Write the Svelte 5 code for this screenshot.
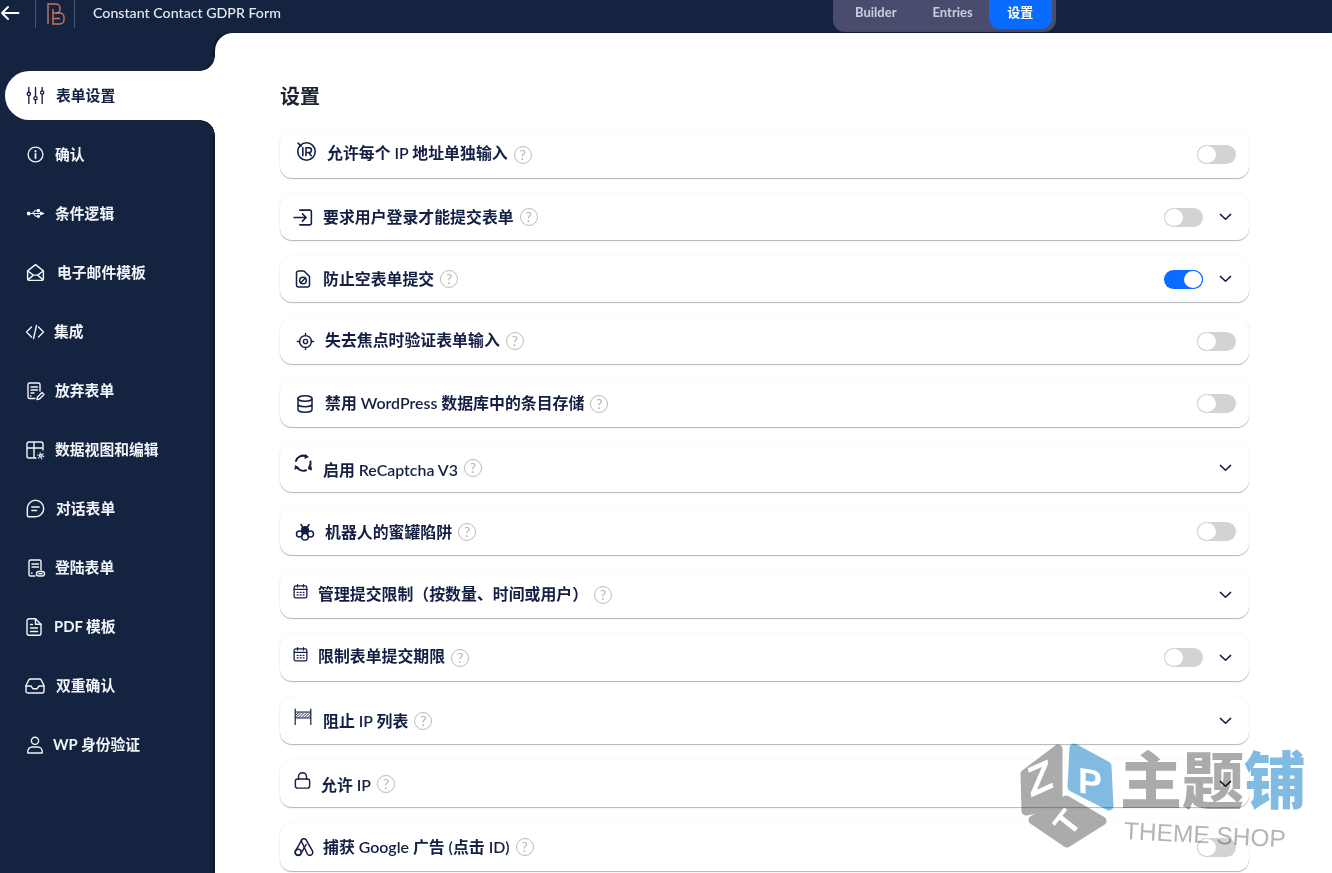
<script>
  const navIcons = {
    sliders: '<path d="M3 1.500v5M3 10v8.500M10 1.500v9.500M10 14.500v4M17 1.500v3.500M17 8.500v10"/><circle cx="3" cy="8.300" r="1.700"/><circle cx="10" cy="12.800" r="1.700"/><circle cx="17" cy="6.800" r="1.700"/>',
    info: '<circle cx="10" cy="10" r="7.800"/><path d="M10 9.400v4.400" stroke-width="1.900"/><path d="M10 6.200v.6" stroke-width="2"/>',
    usb: '<path d="M3 10h12.500M6.500 10l3-3h2.500M7.500 10l3 3h1.500" stroke-width="1.100"/><circle cx="2.800" cy="10" r="1.300" fill="currentColor"/><path d="M15.500 8.700l3 1.300-3 1.300z" fill="currentColor"/><rect x="12" y="6" width="2" height="2" fill="currentColor"/><circle cx="13" cy="13" r="1.100" fill="currentColor"/>',
    mail: '<path d="M2.500 8.500L10 2.500l7.500 6V16a1.500 1.500 0 0 1-1.500 1.500H4A1.500 1.500 0 0 1 2.500 16z"/><path d="M3 16.800l5-4.300h4l5 4.300M3 8.800l5 3.700M17 8.800l-5 3.700"/>',
    code: '<path d="M6.500 5L1.500 10l5 5M13.500 5l5 5-5 5M11.500 3.500l-3 13"/>',
    filepen: '<path d="M10 17.500H4.500A1.500 1.500 0 0 1 3 16V3.500A1.500 1.500 0 0 1 4.500 2h9A1.500 1.500 0 0 1 15 3.500V10"/><path d="M6 6h6.500M6 9h6.500M6 12h3M5.500 15h.5"/><path d="M12 18.500l.5-2.500 4.500-4.500 2 2-4.500 4.500z"/>',
    tablegear: '<path d="M11 18H4a2 2 0 0 1-2-2V4a2 2 0 0 1 2-2h12a2 2 0 0 1 2 2v6M2 8h16M9 2v16"/><circle cx="15.800" cy="15.800" r="1.300" stroke-width="1.400"/><circle cx="15.800" cy="15.800" r="2.900" stroke-width="1.200" stroke-dasharray="1.300 1.700" stroke-linecap="butt"/>',
    chat: '<path d="M10 2.200a7.800 7.800 0 0 1 0 15.600H3.600a1.400 1.400 0 0 1-1.400-1.400V10A7.800 7.800 0 0 1 10 2.200z"/><path d="M6.500 8.500h7M6.500 12h4.500"/>',
    filelink: '<path d="M9 18H4.500A1.500 1.500 0 0 1 3 16.500V3.500A1.500 1.500 0 0 1 4.500 2h9A1.500 1.500 0 0 1 15 3.500V12"/><path d="M6 6h6.500M6 9h6.500M5.500 15h.5"/><rect x="10.500" y="13.500" width="8" height="4.500" rx="2.200"/><path d="M13 15.700h3"/>',
    filetext: '<path d="M11.500 1.800H5A2 2 0 0 0 3 3.800v12.400a2 2 0 0 0 2 2h10a2 2 0 0 0 2-2V7.300z"/><path d="M11.500 1.800v5.500H17M6.500 7.500h2M6.500 11h7M6.500 14.500h7"/>',
    inbox: '<path d="M5.500 3h9a2 2 0 0 1 1.800 1.100l2.700 5.400V15a2 2 0 0 1-2 2H3a2 2 0 0 1-2-2V9.500l2.700-5.400A2 2 0 0 1 5.500 3z"/><path d="M1 10h5l2 2.800h4l2-2.800h5"/>',
    user: '<circle cx="10" cy="5.800" r="3.600"/><path d="M2.800 18v-1.500a4.500 4.500 0 0 1 4.500-4.500h5.400a4.500 4.500 0 0 1 4.500 4.500V18z"/>'
  };

  const rowIcons = {
    noip: '<circle cx="10" cy="10" r="8.300"/><path d="M2 2l3 3M6.500 6.500v7.500M9.500 14V6.500h3a2.200 2.200 0 0 1 0 4.400h-3M12 11l2.500 3" stroke-width="1.500"/>',
    login: '<path d="M6.500 3h9.500a1.500 1.500 0 0 1 1.500 1.500v11a1.500 1.500 0 0 1-1.500 1.500H6.500"/><path d="M1 10h11M9 6.500l3.500 3.500L9 13.500"/>',
    fileban: '<path d="M11 2H5.500A2 2 0 0 0 3.500 4v12a2 2 0 0 0 2 2h9a2 2 0 0 0 2-2V7.500z"/><circle cx="10" cy="11.500" r="3.300"/><path d="M7.800 13.700l4.400-4.400"/>',
    target: '<circle cx="10" cy="10" r="6.200"/><circle cx="10" cy="10" r="2.200"/><path d="M10 1.500v2.300M10 16.200v2.300M1.500 10h2.300M16.200 10h2.300"/>',
    db: '<ellipse cx="10" cy="4.500" rx="7" ry="2.800"/><path d="M3 4.500v11c0 1.500 3 2.800 7 2.800s7-1.300 7-2.800v-11M3 10c0 1.500 3 2.800 7 2.800s7-1.300 7-2.800"/>',
    recaptcha: '<path d="M3 8a7.500 7.500 0 0 1 10-4.800" stroke-width="2"/><path d="M17.500 8.500a7.500 7.500 0 0 1-1.500 6" stroke-width="2"/><path d="M13 17.300a7.500 7.500 0 0 1-9-3" stroke-width="2"/><path d="M12 1l4 3-4.500 2zM14.500 16l4-3 .5 4.500zM1.500 17l.5-5 4 2.500z" fill="currentColor" stroke="none"/>',
    bee: '<circle cx="10" cy="8" r="3.300" fill="currentColor"/><circle cx="4.500" cy="12" r="3"/><circle cx="15.500" cy="12" r="3"/><circle cx="10" cy="14.800" r="3.300"/><path d="M7.500 5L6 2.500M12.500 5L14 2.500"/>',
    calendar: '<rect x="2.500" y="3.500" width="15" height="14" rx="2"/><path d="M2.500 7.500h15M6.500 1.800v3M13.500 1.800v3"/><path d="M6 11h1.200M9.500 11h1.200M13 11h1.200M6 14h1.200M9.500 14h1.200M13 14h1.200" stroke-width="1.400"/>',
    fence: '<path d="M2.200 2v15.500M17.800 2v15.500M2.200 5h15.600M2.200 11h15.600" stroke-width="1.200"/><path d="M3 10.500l5-5M6 10.500l5-5M9 10.500l5-5M12 10.500l5-5M15 10.500l2.500-2.500M3 8l2.500-2.500" stroke-width="1"/>',
    lock: '<rect x="2.500" y="8.500" width="15" height="9.500" rx="2.200"/><path d="M5.800 8.500V6a4.200 4.200 0 0 1 8.400 0v2.500"/>',
    gads: '<path d="M7.200 3.800a2.800 2.800 0 0 1 4.900-1l6.300 11a3 3 0 0 1-5.200 3z"/><path d="M7.800 2.800L1.600 13.800a3 3 0 0 0 5.200 3l5.300-9.300"/><circle cx="4.200" cy="15.300" r="3"/>'
  };

  const nav = [
    { icon: 'sliders', label: '表单设置', x: 26, size: 19, text: 56, active: true },
    { icon: 'info', label: '确认', x: 26, size: 19, text: 55 },
    { icon: 'usb', label: '条件逻辑', x: 26, size: 19, text: 55 },
    { icon: 'mail', label: '电子邮件模板', x: 25, size: 21, text: 57 },
    { icon: 'code', label: '集成', x: 25, size: 20, text: 54 },
    { icon: 'filepen', label: '放弃表单', x: 25, size: 20, text: 55 },
    { icon: 'tablegear', label: '数据视图和编辑', x: 25, size: 20, text: 55 },
    { icon: 'chat', label: '对话表单', x: 25, size: 21, text: 56 },
    { icon: 'filelink', label: '登陆表单', x: 26, size: 20, text: 55 },
    { icon: 'filetext', label: 'PDF 模板', x: 24, size: 20, text: 54 },
    { icon: 'inbox', label: '双重确认', x: 25, size: 20, text: 56 },
    { icon: 'user', label: 'WP 身份验证', x: 25, size: 20, text: 53 }
  ];

  const rows = [
    { icon: 'noip', label: '允许每个 IP 地址单独输入', h: 47, x: 296, size: 21, text: 327, lift: 3, drop: -1, toggle: 'off' },
    { icon: 'login', label: '要求用户登录才能提交表单', h: 46, x: 293, size: 21, text: 323, toggle: 'off', chevron: true },
    { icon: 'fileban', label: '防止空表单提交', h: 46, x: 293, size: 20, text: 323, toggle: 'on', chevron: true },
    { icon: 'target', label: '失去焦点时验证表单输入', h: 46, x: 296, size: 19, text: 325, drop: -1, toggle: 'off' },
    { icon: 'db', label: '禁用 WordPress 数据库中的条目存储', h: 47, x: 295, size: 20, text: 325, toggle: 'off' },
    { icon: 'recaptcha', label: '启用 ReCaptcha V3', h: 49, x: 293, size: 20, text: 323, lift: 5, drop: 3, chevron: true },
    { icon: 'bee', label: '机器人的蜜罐陷阱', h: 47, x: 295, size: 20, text: 325, drop: 1, toggle: 'off' },
    { icon: 'calendar', label: '管理提交限制（按数量、时间或用户）', h: 47, x: 292, size: 17, text: 318, lift: 3, chevron: true },
    { icon: 'calendar', label: '限制表单提交期限', h: 47, x: 292, size: 17, text: 318, lift: 3, drop: -1, toggle: 'off', chevron: true },
    { icon: 'fence', label: '阻止 IP 列表', h: 47, x: 293, size: 20, text: 323, lift: 4, drop: 1, chevron: true },
    { icon: 'lock', label: '允许 IP', h: 47, x: 293, size: 19, text: 321, lift: 3, drop: 2, chevron: true },
    { icon: 'gads', label: '捕获 Google 广告 (点击 ID)', h: 48, x: 294, size: 20, text: 323, toggle: 'off' }
  ];

  const tabs = ['Builder', 'Entries', '设置'];
</script>

<div class="page">
  <header class="topbar">
    <svg class="back" viewBox="0 0 20 16" width="20" height="16" fill="none" stroke="currentColor" stroke-width="2" stroke-linecap="round" stroke-linejoin="round">
      <path d="M18.500 8H2M8 2L2 8l6 6" />
    </svg>
    <div class="brand">
      <svg viewBox="0 0 18 22" width="18" height="22" fill="none" stroke="#c9775c" stroke-width="1.400">
        <path d="M1 21V1h8a4 4 0 0 1 4 4v1a4 4 0 0 1-4 4H6" />
        <path d="M6 6v15h7a4 4 0 0 0 4-4v-3a4 4 0 0 0-4-4H9M6 15.500h7" />
      </svg>
    </div>
    <div class="title">Constant Contact GDPR Form</div>
    <nav class="tabs">
      {#each tabs as tab, i}
        <span class="tab" class:current={i === 2}>{tab}</span>
      {/each}
    </nav>
  </header>

  <div class="main">
    <aside class="sidebar">
      {#each nav as item}
        <div class="nav-item" class:active={item.active} style:padding-left="{item.x - 5}px">
          <svg class="ic" viewBox="0 0 20 20" width={item.size} height={item.size} fill="none" stroke="currentColor" stroke-width="1.400" stroke-linecap="round" stroke-linejoin="round">
            {@html navIcons[item.icon]}
          </svg>
          <span class="nav-label" style:margin-left="{item.text - item.x - item.size}px">{item.label}</span>
        </div>
      {/each}
    </aside>

    <main class="content">
      <h1>设置</h1>
      <div class="list">
        {#each rows as row}
          <div class="row" style:height="{row.h}px">
            <svg class="ic" viewBox="0 0 20 20" width={row.size} height={row.size} fill="none" stroke="currentColor" stroke-width="1.500" stroke-linecap="round" stroke-linejoin="round" style:margin-left="{row.x - 280}px" style:margin-bottom="{(row.lift || 0) * 2}px">
              {@html rowIcons[row.icon]}
            </svg>
            <span class="label" style:margin-left="{row.text - row.x - row.size}px" style:margin-top="{(row.drop || 0) * 2}px">{row.label}</span>
            <span class="help">?</span>
            <div class="controls">
              {#if row.toggle}
                <span class="toggle" class:on={row.toggle === 'on'}><i></i></span>
              {/if}
              {#if row.chevron}
                <svg class="chev" viewBox="0 0 14 8" width="13" height="8" fill="none" stroke="currentColor" stroke-width="1.600" stroke-linecap="round" stroke-linejoin="round">
                  <path d="M1.500 1.200L7 6.500l5.500-5.300" />
                </svg>
              {/if}
            </div>
          </div>
        {/each}
      </div>
    </main>
  </div>

  <div class="watermark" aria-hidden="true">
    <svg viewBox="0 0 100 110" width="100" height="110">
      <g stroke-width="9" stroke-linejoin="round">
        <path d="M7 36L40 11v55L8 73z" fill="#ababab" stroke="#ababab" />
        <path d="M56 10l33 18 2 40-37-19z" fill="#82bbe2" stroke="#82bbe2" />
        <path d="M15 82l33-20 36 21-35 22z" fill="#ababab" stroke="#ababab" />
      </g>
      <g fill="#fff" font-family="'Liberation Sans', sans-serif" font-weight="700">
        <text x="10" y="60" font-size="42" transform="rotate(-10 24 45) skewY(-14)">Z</text>
        <text x="60" y="46" font-size="36" transform="skewY(8)">P</text>
        <text x="38" y="97" font-size="34" transform="rotate(-52 48 84)">T</text>
      </g>
    </svg>
    <div class="wm-text">
      <div class="wm-cn">主题<b>铺</b></div>
      <div class="wm-en">THEME SHOP</div>
    </div>
  </div>
</div>

<style>
  :global(body) {
    margin: 0;
    background: #14233f;
  }

  .page {
    --navy: #14233f;
    --ink: #141f45;
    position: relative;
    display: flex;
    flex-direction: column;
    height: 873px;
    overflow: hidden;
    background: var(--navy);
    font-family: "Lato", "Noto Sans CJK SC", sans-serif;
  }

  .topbar {
    display: flex;
    align-items: flex-start;
    flex: none;
    height: 33px;
    color: #fff;
  }

  .back {
    flex: none;
    margin: 5px 0 0 0;
  }

  .brand {
    flex: none;
    box-sizing: border-box;
    width: 40px;
    height: 28px;
    margin-left: 15px;
    padding: 3px 0 0 11px;
    border-left: 1px solid #4a5670;
    border-right: 1px solid #4a5670;
  }

  .title {
    flex: none;
    width: 740px;
    margin-left: 18px;
    font-size: 14.200px;
    font-weight: 500;
    line-height: 26px;
    color: #e8ebf2;
  }

  .tabs {
    display: flex;
    flex: none;
    box-sizing: border-box;
    width: 223px;
    height: 32px;
    padding-left: 22px;
    background: #4a4c6d;
    border-radius: 0 0 12px 12px;
  }

  .tab {
    box-sizing: border-box;
    font-size: 13px;
    font-weight: 700;
    line-height: 25px;
    color: #c9cfe0;
    margin-right: 36px;
  }

  .tab.current {
    width: 63px;
    height: 29px;
    margin: 0 0 0 -20px;
    text-align: center;
    color: #fff;
    background: #0a6cff;
    border-radius: 0 0 11px 11px;
  }

  .main {
    display: flex;
    flex: 1;
    min-height: 0;
  }

  .sidebar {
    display: flex;
    flex-direction: column;
    flex: none;
    gap: 10px;
    box-sizing: border-box;
    width: 215px;
    padding: 38px 0 0 5px;
    position: relative;
    z-index: 1;
  }

  .nav-item {
    position: relative;
    display: flex;
    align-items: center;
    flex: none;
    height: 49px;
    font-size: 14.800px;
    font-weight: 700;
    color: #f1f4f9;
  }

  .nav-label {
    margin-bottom: 2px;
  }

  .nav-item.active {
    color: var(--ink);
    font-weight: 600;
    background: #fff;
    border-radius: 25px 0 0 25px;
  }

  .nav-item.active::before,
  .nav-item.active::after {
    content: "";
    position: absolute;
    right: 0;
    width: 15px;
    height: 15px;
  }

  .nav-item.active::before {
    bottom: 100%;
    background: radial-gradient(circle at 0 0, var(--navy) 14.500px, #fff 15px);
  }

  .nav-item.active::after {
    top: 100%;
    background: radial-gradient(circle at 0 100%, var(--navy) 14.500px, #fff 15px);
  }

  .ic {
    flex: none;
  }

  .content {
    flex: 1;
    min-width: 0;
    box-sizing: border-box;
    padding: 49px 83px 0 65px;
    background: #fff;
    border-top-left-radius: 18px;
    box-shadow: -2px 0 3px rgba(0, 0, 0, 0.45);
  }

  h1 {
    margin: 0 0 21px;
    font-size: 20px;
    font-weight: 600;
    line-height: 28px;
    color: #1c2433;
  }

  .list {
    display: flex;
    flex-direction: column;
    gap: 16px;
  }

  .row {
    display: flex;
    align-items: center;
    flex: none;
    box-sizing: border-box;
    background: #fff;
    border-radius: 12px;
    box-shadow: 0 1px 1px rgba(0, 0, 0, 0.28), 0 0 3px rgba(0, 0, 0, 0.05);
    color: var(--ink);
  }

  .label {
    font-size: 15.900px;
    font-weight: 600;
    white-space: nowrap;
    padding-bottom: 2px;
  }

  .help {
    flex: none;
    box-sizing: border-box;
    width: 18px;
    height: 18px;
    margin-left: 6px;
    font-size: 14px;
    line-height: 16px;
    text-align: center;
    color: #b5b5b5;
    border: 1px solid #bcbcbc;
    border-radius: 50%;
  }

  .controls {
    display: flex;
    align-items: center;
    gap: 16px;
    margin-left: auto;
    padding-right: 17px;
  }

  .controls .toggle:last-child {
    margin-right: -4px;
  }

  .toggle {
    position: relative;
    display: block;
    width: 39px;
    height: 19px;
    background: #d3d3d3;
    border-radius: 10px;
  }

  .toggle i {
    position: absolute;
    top: 0;
    left: 0;
    box-sizing: border-box;
    width: 20px;
    height: 19px;
    background: #fff;
    border: 1px solid #d3d3d3;
    border-radius: 50%;
  }

  .toggle.on {
    background: #0a6cff;
  }

  .toggle.on i {
    left: 19px;
    border-color: #0a6cff;
  }

  .chev {
    flex: none;
  }

  .watermark {
    position: absolute;
    left: 1018px;
    top: 738px;
    display: flex;
    mix-blend-mode: multiply;
    pointer-events: none;
  }

  .wm-text {
    margin-left: 2px;
    color: #ababab;
  }

  .wm-cn {
    font-size: 62px;
    font-weight: 900;
    line-height: 76px;
    margin-top: 4px;
    white-space: nowrap;
  }

  .wm-cn b {
    color: #82bbe2;
    font-weight: 900;
  }

  .wm-en {
    margin: -1px 0 0 4px;
    font-family: "Liberation Sans", sans-serif;
    font-size: 24.500px;
    color: #b5b5b5;
    white-space: nowrap;
    transform: rotate(3deg);
    transform-origin: left center;
  }
</style>
